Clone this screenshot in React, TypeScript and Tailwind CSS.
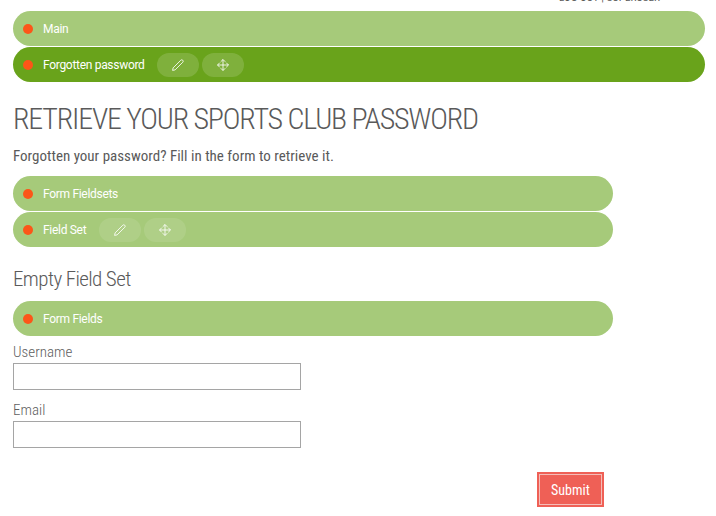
import type { ReactNode } from "react";

function Pencil() {
  return (
    <svg width="12" height="12" viewBox="0 0 12 12" fill="none" stroke="currentColor" strokeWidth="0.85">
      <path d="M.6 11.4 1.1 8.9 8.8 1.2Q9.8.3 10.7 1.2L10.8 1.3Q11.7 2.2 10.8 3.2L3.1 10.9Z" />
    </svg>
  );
}

function Move() {
  return (
    <svg width="12" height="12" viewBox="0 0 12 12" fill="none" stroke="currentColor" strokeWidth="0.85">
      <path d="M6 .6V11.4M.6 6H11.4M3.7 2.8 6 .5 8.3 2.8M3.7 9.2 6 11.5 8.3 9.2M2.8 3.7 .5 6 2.8 8.3M9.2 3.7 11.5 6 9.2 8.3" />
    </svg>
  );
}

function Tool({ label, tone, children }: { label: string; tone: string; children: ReactNode }) {
  return (
    <button aria-label={label} className={`flex h-6 w-[42px] items-center justify-center rounded-full text-white ${tone}`}>
      {children}
    </button>
  );
}

function Bar({ title, textWidth, tone = "bg-[#a6ca7a]", toolTone = "bg-white/15", tools = false }: { title: string; textWidth: string; tone?: string; toolTone?: string; tools?: boolean }) {
  return (
    <div className={`flex h-[35px] items-center rounded-full pl-[10px] text-white ${tone}`}>
      <span className="mr-[10px] size-[10px] rounded-full bg-[#fc5618]" />
      <span className={`whitespace-nowrap text-[12px] tracking-[-0.3px] ${textWidth}`}>{title}</span>
      {tools && (
        <div className="mt-px flex gap-[3px]">
          <Tool label="Edit" tone={toolTone}><Pencil /></Tool>
          <Tool label="Move" tone={toolTone}><Move /></Tool>
        </div>
      )}
    </div>
  );
}

function Field({ label }: { label: string }) {
  return (
    <label className="block h-[58px] w-[288px]">
      <span className="block h-[22px] text-[15px] font-light leading-[22px] text-[#606060] [font-stretch:75%]">{label}</span>
      <input className="block h-[27px] w-full border border-[#a5a5a5] bg-white px-2 outline-none" />
    </label>
  );
}

export default function App() {
  return (
    <main className="h-[516px] w-[716px] overflow-hidden bg-white pl-[13px] pr-[11px] font-['Roboto_Condensed',Roboto,sans-serif] text-[#5a5a5a] antialiased">
      <div className="flex h-[11px] items-end justify-end overflow-hidden pr-[45px]">
        <span className="mb-[7px] whitespace-nowrap text-[11px] leading-[13px] tracking-[0.1px] [font-stretch:75%]">LOG OUT | SUPERUSER</span>
      </div>
      <div className="flex flex-col gap-px font-[Roboto,sans-serif]">
        <Bar title="Main" textWidth="w-[60px]" />
        <Bar title="Forgotten password" textWidth="w-[114px]" tone="bg-[#69a31b]" tools />
      </div>
      <h1 className="mt-[17px] h-[40px] whitespace-nowrap text-[30px] font-light leading-[40px] tracking-[-1.2px] [font-stretch:75%]">RETRIEVE YOUR SPORTS CLUB PASSWORD</h1>
      <p className="mt-[6px] h-[22px] whitespace-nowrap text-[15px] leading-[22px] tracking-[0.01px] [font-stretch:75%]">Forgotten your password? Fill in the form to retrieve it.</p>
      <form className="mt-[9px] w-[600px]" onSubmit={(event) => event.preventDefault()}>
        <div className="flex flex-col gap-px font-[Roboto,sans-serif]">
          <Bar title="Form Fieldsets" textWidth="w-[90px]" />
          <Bar title="Field Set" textWidth="w-[56px]" toolTone="bg-white/10" tools />
        </div>
        <h2 className="mt-[17px] h-[30px] text-[21px] font-light leading-[30px] tracking-[-0.6px] [font-stretch:75%]">Empty Field Set</h2>
        <div className="mt-[7px] font-[Roboto,sans-serif]">
          <Bar title="Form Fields" textWidth="w-[90px]" />
        </div>
        <div className="mt-[5px]">
          <Field label="Username" />
          <Field label="Email" />
        </div>
        <div className="mt-[15px] flex justify-end pr-[9px]">
          <button className="h-[35px] w-[67px] border border-[#ef6056] bg-[#ef6056] p-px">
            <span className="flex h-full items-center justify-center border border-[#f4bdb8] pt-px text-[14px] text-white [font-stretch:75%]">Submit</span>
          </button>
        </div>
      </form>
    </main>
  );
}
